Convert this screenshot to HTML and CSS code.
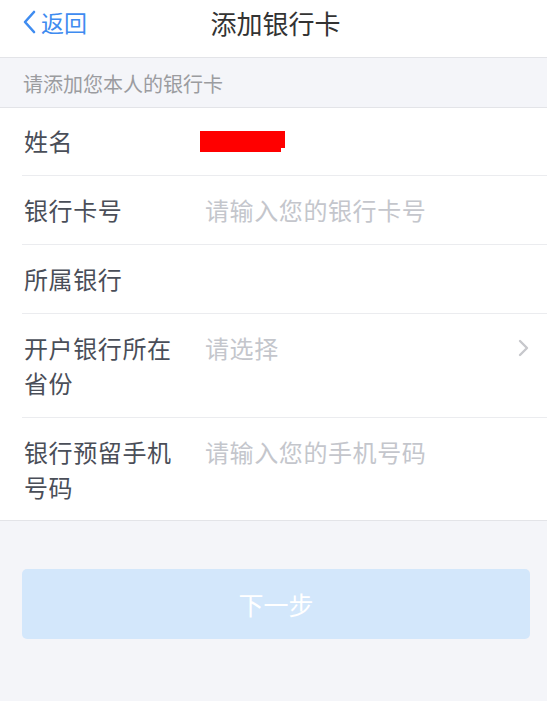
FILE: index.html
```html
<!DOCTYPE html>
<html lang="zh-CN">
<head>
<meta charset="utf-8">
<title>添加银行卡</title>
<link rel="stylesheet" href="styles.css">
</head>
<body>
<div class="page">
  <header class="nav">
    <div class="back">
      <svg class="back-icon" width="14" height="24" viewBox="0 0 14 24"><path d="M12 2 L3 12 L12 22" fill="none" stroke="#3f8cf0" stroke-width="2.6" stroke-linecap="round" stroke-linejoin="round"/></svg>
      <span>返回</span>
    </div>
    <div class="title">添加银行卡</div>
    <div class="nav-spacer"></div>
  </header>
  <div class="hint">请添加您本人的银行卡</div>
  <div class="form">
    <div class="row first">
      <div class="label">姓名</div>
      <div class="value">
        <div class="redact"><div class="redact-a"></div><div class="redact-b"></div></div>
      </div>
    </div>
    <div class="row">
      <div class="label">银行卡号</div>
      <div class="value placeholder">请输入您的银行卡号</div>
    </div>
    <div class="row">
      <div class="label">所属银行</div>
      <div class="value"></div>
    </div>
    <div class="row">
      <div class="label">开户银行所在省份</div>
      <div class="value placeholder">请选择</div>
      <svg class="arrow" width="12" height="18" viewBox="0 0 12 18"><path d="M2 2 L9 9 L2 16" fill="none" stroke="#c7c8cc" stroke-width="2.4" stroke-linecap="round" stroke-linejoin="round"/></svg>
    </div>
    <div class="row last">
      <div class="label">银行预留手机号码</div>
      <div class="value placeholder">请输入您的手机号码</div>
    </div>
  </div>
  <div class="footer">
    <div class="btn">下一步</div>
  </div>
</div>
</body>
</html>
```

FILE: styles.css
```css
* { box-sizing: border-box; }
html, body { margin: 0; padding: 0; }
body {
  font-family: "Noto Sans CJK SC", "Noto Sans", sans-serif;
  background: #f4f5f9;
  width: 547px;
  height: 701px;
  overflow: hidden;
}
.page { display: flex; flex-direction: column; height: 701px; }
.nav {
  height: 58px;
  background: #fff;
  border-bottom: 1px solid #e3e4e8;
  display: flex;
  align-items: center;
  padding: 0 0 13px 22px;
}
.back {
  display: flex;
  align-items: center;
  gap: 5px;
  color: #3f8cf0;
  font-size: 23px;
  width: 120px;
}
.back-icon { display: block; }
.title {
  flex: 1;
  text-align: center;
  font-size: 26px;
  color: #333;
  margin-left: -18px;
}
.nav-spacer { width: 120px; }
.hint {
  height: 50px;
  display: flex;
  align-items: center;
  padding: 2px 0 0 23px;
  font-size: 20px;
  color: #9b9ca0;
  border-bottom: 1px solid #e3e4e8;
}
.form {
  background: #fff;
  padding-left: 22px;
  border-bottom: 1px solid #e3e4e8;
}
.row {
  display: flex;
  align-items: flex-start;
  padding: 16px 17px 17px 0;
  border-bottom: 1px solid #ebecef;
  font-size: 24px;
  line-height: 35px;
  letter-spacing: 0.6px;
}
.row.first { padding-top: 15px; }
.row.last { border-bottom: none; padding-bottom: 16px; }
.label {
  width: 152px;
  padding-left: 2px;
  color: #4a4e58;
  flex-shrink: 0;
}
.value {
  flex: 1;
  margin-left: 31px;
  min-height: 35px;
  color: #4a4e58;
}
.placeholder { color: #c4c6cc; }
.redact { padding-top: 8px; margin-left: -5px; display: flex; flex-direction: column; }
.redact-a { width: 85px; height: 17px; background: #ff0000; }
.redact-b { width: 81px; height: 4px; background: #ff0000; }
.arrow { margin-top: 9px; display: block; }
.footer {
  flex: 1;
  padding: 48px 17px 0 22px;
}
.btn {
  height: 70px;
  background: #d3e7fb;
  border-radius: 5px;
  color: #fff;
  font-size: 25px;
  display: flex;
  align-items: center;
  justify-content: center;
}
```
